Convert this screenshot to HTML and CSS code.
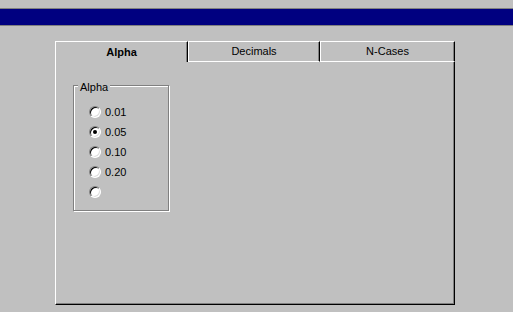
FILE: index.html
```html
<!DOCTYPE html>
<html lang="en">
<head>
<title>Options</title>
<link rel="stylesheet" href="styles.css">
</head>
<body>

<div class="titlebar"></div>

<div class="dialog">
    <div class="tabs">
        <div class="tab active">Alpha</div>
        <div class="tab">Decimals</div>
        <div class="tab last">N-Cases</div>
    </div>
    <div class="panel">
        <div class="group">
            <span class="caption">Alpha</span>
            <label class="option"><span class="radio"></span>0.01</label>
            <label class="option"><span class="radio checked"></span>0.05</label>
            <label class="option"><span class="radio"></span>0.10</label>
            <label class="option"><span class="radio"></span>0.20</label>
            <label class="option"><span class="radio"></span></label>
        </div>
    </div>
</div>

</body>
</html>
```
FILE: styles.css
```css
body {
  margin: 0;
  background-color: #c0c0c0;
  font-family: "Liberation Sans", Arial, sans-serif;
  font-size: 11px;
  color: #000;
}
.titlebar {
  margin-top: 8px;
  height: 16px;
  background-color: #000080;
  border-top: 1px solid #808080;
  border-bottom: 1px solid #808080;
}
.dialog {
  margin: 15px 0 0 55px;
  width: 400px;
}
.tabs {
  display: flex;
}
.tab {
  box-sizing: border-box;
  height: 21px;
  line-height: 19px;
  text-align: center;
  border-top: 1px solid #fff;
  border-left: 1px solid #fff;
  border-right: 1px solid #000;
  border-bottom: 1px solid #fff;
  box-shadow: inset -1px 0 0 #808080;
  width: 132px;
}
.tab.active {
  width: 133px;
  font-weight: bold;
  border-bottom: none;
  line-height: 20px;
}
.tab.last {
  width: 135px;
}
.panel {
  box-sizing: border-box;
  height: 243px;
  border-left: 1px solid #fff;
  border-right: 1px solid #000;
  border-bottom: 1px solid #000;
  box-shadow: inset -1px -1px 0 #808080;
  padding: 23px 0 0 17px;
}
.group {
  position: relative;
  box-sizing: border-box;
  width: 96px;
  height: 126px;
  border: 1px solid #808080;
  box-shadow: 1px 1px 0 #fff, inset 1px 1px 0 #fff;
  padding: 16px 0 0 15px;
}
.caption {
  position: absolute;
  top: -5px;
  left: 4px;
  padding: 0 2px;
  line-height: 13px;
  background-color: #c0c0c0;
}
.option {
  display: flex;
  align-items: center;
  height: 20px;
}
.radio {
  box-sizing: border-box;
  width: 12px;
  height: 12px;
  margin-right: 4px;
  border-radius: 50%;
  border: 1px solid;
  border-color: #808080 #fff #fff #808080;
  background-color: #fff;
  box-shadow: inset 1px 1px 0 #000, inset -1px -1px 0 #dfdfdf;
  position: relative;
}
.radio.checked::after {
  content: "";
  position: absolute;
  left: 3px;
  top: 3px;
  width: 4px;
  height: 4px;
  border-radius: 50%;
  background-color: #000;
}
```
